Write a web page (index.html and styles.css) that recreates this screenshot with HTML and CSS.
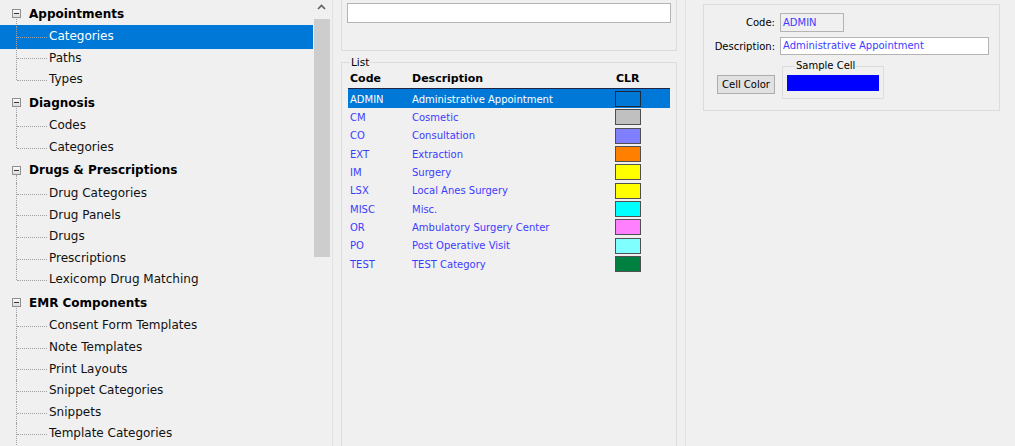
FILE: index.html
```html
<!DOCTYPE html>
<html lang="en">

<head>
    <title>Setup - Appointment Categories</title>
    <link rel="stylesheet" href="styles.css">
</head>

<body>

    <div class="app">
        <div class="tree-pane">
            <ul class="tree">
                <li class="group">
                    <div class="parent"><span class="toggle"></span>Appointments</div>
                    <ul class="children">
                        <li class="selected">Categories</li>
                        <li>Paths</li>
                        <li>Types</li>
                    </ul>
                </li>
                <li class="group">
                    <div class="parent"><span class="toggle"></span>Diagnosis</div>
                    <ul class="children">
                        <li>Codes</li>
                        <li>Categories</li>
                    </ul>
                </li>
                <li class="group">
                    <div class="parent"><span class="toggle"></span>Drugs &amp; Prescriptions</div>
                    <ul class="children">
                        <li>Drug Categories</li>
                        <li>Drug Panels</li>
                        <li>Drugs</li>
                        <li>Prescriptions</li>
                        <li>Lexicomp Drug Matching</li>
                    </ul>
                </li>
                <li class="group">
                    <div class="parent"><span class="toggle"></span>EMR Components</div>
                    <ul class="children open">
                        <li>Consent Form Templates</li>
                        <li>Note Templates</li>
                        <li>Print Layouts</li>
                        <li>Snippet Categories</li>
                        <li>Snippets</li>
                        <li>Template Categories</li>
                    </ul>
                </li>
            </ul>
            <div class="scrollbar">
                <div class="arrow">
                    <svg width="9" height="6" viewBox="0 0 9 6"><path d="M1 5 L4.5 1.5 L8 5" fill="none" stroke="#606060" stroke-width="1.6"/></svg>
                </div>
                <div class="thumb"></div>
            </div>
        </div>

        <div class="middle">
            <div class="search-box">
                <input type="text" class="search-input">
            </div>
            <fieldset class="list-box">
                <legend>List</legend>
                <div class="list-row list-head">
                    <span>Code</span>
                    <span>Description</span>
                    <span>CLR</span>
                </div>
                <div id="list"></div>
            </fieldset>
        </div>

        <div class="right">
            <div class="detail-box">
                <div class="field-grid">
                    <label>Code:</label>
                    <div class="field code-field">ADMIN</div>
                    <label>Description:</label>
                    <div class="field desc-field">Administrative Appointment</div>
                </div>
                <div class="color-row">
                    <button class="cell-btn">Cell Color</button>
                    <fieldset class="sample-box">
                        <legend>Sample Cell</legend>
                        <div class="sample-fill"></div>
                    </fieldset>
                </div>
            </div>
        </div>
    </div>

    <script>
        const categories = [
            ['ADMIN', 'Administrative Appointment', '#0078d7'],
            ['CM', 'Cosmetic', '#c0c0c0'],
            ['CO', 'Consultation', '#8080ff'],
            ['EXT', 'Extraction', '#ff8000'],
            ['IM', 'Surgery', '#ffff00'],
            ['LSX', 'Local Anes Surgery', '#ffff00'],
            ['MISC', 'Misc.', '#00ffff'],
            ['OR', 'Ambulatory Surgery Center', '#ff80ff'],
            ['PO', 'Post Operative Visit', '#80ffff'],
            ['TEST', 'TEST Category', '#008040']
        ];
        const list = document.getElementById('list');
        categories.forEach((cat, i) => {
            const row = document.createElement('div');
            row.className = i === 0 ? 'list-row item selected' : 'list-row item';
            row.innerHTML = `<span>${cat[0]}</span><span>${cat[1]}</span>` +
                `<span class="swatch" style="background:${cat[2]}"></span>`;
            list.appendChild(row);
        });
    </script>

</body>

</html>
```

FILE: styles.css
```css
body {
    margin: 0;
    background-color: #f0f0f0;
    font-family: "DejaVu Sans", Verdana, sans-serif;
    overflow: hidden;
}

.app {
    display: flex;
    height: 446px;
    overflow: hidden;
}

/* tree */

.tree-pane {
    width: 332px;
    display: flex;
    border-right: 1px solid #e2e2e2;
}

.tree {
    width: 313px;
    list-style: none;
    margin: 0;
    padding: 1.5px 0 0 0;
    font-size: 12px;
    color: #111;
}

.tree ul {
    list-style: none;
    margin: 0;
    padding: 0;
}

.parent {
    position: relative;
    height: 24.5px;
    line-height: 24.5px;
    padding-left: 29px;
    font-weight: bold;
    color: #000;
}

.parent::after {
    content: '';
    position: absolute;
    left: 16px;
    top: 17px;
    bottom: 0;
    border-left: 1px dotted #a0a0a0;
}

.toggle {
    position: absolute;
    left: 12px;
    top: 7.5px;
    width: 7px;
    height: 7px;
    border: 1px solid #8f8f8f;
    background: linear-gradient(#fafafa, #dcdcdc);
    z-index: 1;
}

.toggle::after {
    content: '';
    position: absolute;
    left: 1px;
    top: 3px;
    width: 5px;
    height: 1px;
    background: #333;
}

.children li {
    position: relative;
    height: 21.6px;
    line-height: 21.6px;
    padding-left: 49px;
}

.children li::before {
    content: '';
    position: absolute;
    left: 16px;
    top: 0;
    bottom: 0;
    border-left: 1px dotted #a0a0a0;
}

.children li:last-child::before {
    bottom: 50%;
}

.children.open li:last-child::before {
    bottom: -14px;
}

.children li::after {
    content: '';
    position: absolute;
    left: 17px;
    width: 30px;
    top: 50%;
    border-top: 1px dotted #a0a0a0;
}

.children li.selected {
    background-color: #0078d7;
    color: #fff;
    box-shadow: 0 -1px 0 #0078d7, 0 1px 0 #0078d7;
}

.scrollbar {
    width: 17px;
    background-color: #f0f0f0;
}

.arrow {
    height: 17px;
    display: flex;
    justify-content: center;
    align-items: center;
    margin-top: -2px;
}

.thumb {
    margin: 4px 0 0 1px;
    height: 238px;
    background-color: #cdcdcd;
}

/* middle list */

.middle {
    width: 336px;
    padding: 0 8px;
}

.search-box {
    border: 1px solid #dcdcdc;
    border-top: none;
    box-sizing: border-box;
    width: 336px;
    height: 51px;
    padding: 3px 0 0 5px;
}

.search-input {
    display: block;
    width: 324px;
    height: 20px;
    box-sizing: border-box;
    margin: 0;
    border: 1px solid #b4b4b4;
    background: #fff;
}

fieldset {
    margin: 0;
    border: 1px solid #dcdcdc;
    min-width: 0;
}

legend {
    font-size: 10.5px;
    line-height: 12px;
    padding: 0 1px;
    color: #000;
}

.list-box {
    margin-top: 5px;
    height: 390px;
    box-sizing: border-box;
    border-bottom: none;
    padding: 2px 6px 0 6px;
}

.list-box legend {
    margin-left: 2px;
}

.list-row {
    display: grid;
    grid-template-columns: 62px 204px 26px;
    align-items: center;
    padding-left: 2px;
}

.list-head {
    height: 20px;
    line-height: 18px;
    align-items: start;
    font-size: 11px;
    font-weight: bold;
    color: #000;
}

.item {
    height: 18.33px;
    font-size: 10px;
    color: #3c3cff;
}

.item.selected {
    background-color: #0078d7;
    color: #fff;
    box-shadow: 0 -1px 0 #0078d7, 0 -2px 0 #23233f;
}

.swatch {
    display: block;
    margin-left: -1px;
    width: 24px;
    height: 14px;
    border: 1px solid #505050;
}

.item.selected .swatch {
    border-color: #1c2a3a;
}

/* right detail */

.right {
    flex: 1;
    border-left: 1px solid #e2e2e2;
    padding: 4px 0 0 17px;
}

.detail-box {
    width: 297px;
    height: 107px;
    box-sizing: border-box;
    border: 1px solid #dcdcdc;
    padding-top: 8px;
    font-size: 10px;
}

.field-grid {
    display: grid;
    grid-template-columns: 71px 209px;
    column-gap: 5px;
    row-gap: 5px;
    align-items: center;
}

.field-grid label {
    text-align: right;
    color: #000;
}

.field {
    box-sizing: border-box;
    height: 18px;
    line-height: 16px;
    border: 1px solid #b4b4b4;
    padding-left: 2px;
    color: #3c3cff;
}

.code-field {
    width: 64px;
    height: 19px;
    line-height: 17px;
    background-color: #f0f0f0;
}

.desc-field {
    background-color: #fff;
}

.color-row {
    display: flex;
    align-items: flex-start;
    margin-top: 5px;
    padding-left: 13px;
}

.cell-btn {
    margin-top: 15px;
    width: 58px;
    height: 19px;
    padding: 0;
    font-family: "DejaVu Sans", Verdana, sans-serif;
    font-size: 10px;
    color: #000;
    background-color: #e1e1e1;
    border: 1px solid #adadad;
}

.sample-box {
    margin-left: 7px;
    width: 102px;
    box-sizing: border-box;
    padding: 3px 4px 7px 4px;
}

.sample-box legend {
    margin-left: 8px;
    font-size: 10px;
}

.sample-fill {
    height: 16px;
    background-color: #0000ff;
}
```
